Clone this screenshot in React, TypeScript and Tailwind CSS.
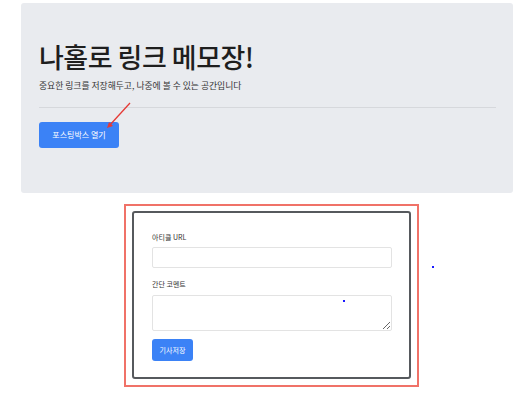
import React from 'react'

export default function App() {
  return (
    <div className="relative w-[531px] h-[398px] bg-white pt-[3px] font-['Noto_Sans_CJK_KR','Noto_Sans',sans-serif] text-[#222]">
      <section className="ml-[21px] w-[492px] h-[190px] rounded-[3px] bg-[#e9ebef] pl-[18px] pr-[17px] pt-[38px]">
        <h1 className="text-[27px] leading-[32px] font-medium tracking-[-0.5px] text-[#1e1e1e]">
          나홀로 링크 메모장!
        </h1>
        <p className="mt-[7px] text-[8.8px] leading-[12px] text-[#333]">
          중요한 링크를 저장해두고, 나중에 볼 수 있는 공간입니다
        </p>
        <hr className="mt-[15px] border-t border-[#d6d8dc]" />
        <button className="mt-[14px] w-[80px] h-[26px] rounded-[3px] bg-[#3b82f6] text-[8px] text-white">
          포스팅박스 열기
        </button>
      </section>

      <div className="ml-[124px] mt-[11px] w-[295px] h-[183px] border-2 border-[#f07268] pt-[5px] px-[6px] pb-[6px]">
        <form className="h-full rounded-[3px] border-2 border-[#56595d] bg-white pl-[18px] pr-[17px] pt-[19px]">
          <label htmlFor="url" className="block text-[7px] leading-[10px] text-[#333]">
            아티클 URL
          </label>
          <input
            id="url"
            type="text"
            className="mt-[5px] block w-[240px] h-[21px] rounded-[2px] border border-[#e3e3e3] bg-white"
          />
          <label htmlFor="comment" className="mt-[11px] block text-[7px] leading-[10px] text-[#333]">
            간단 코멘트
          </label>
          <textarea
            id="comment"
            className="mt-[6px] block w-[240px] h-[36px] rounded-[2px] border border-[#e3e3e3] bg-white"
          />
          <button
            type="button"
            className="mt-[8px] w-[41px] h-[22px] rounded-[3px] bg-[#3b82f6] text-[7px] text-white"
          >
            기사저장
          </button>
        </form>
      </div>

      {/* annotation arrow */}
      <svg className="absolute left-[100px] top-[98px]" width="40" height="36" viewBox="0 0 40 36">
        <line x1="30" y1="5" x2="9" y2="28" stroke="#e53935" strokeWidth="1.3" />
        <path d="M7 30 L9 24 L13 28 Z" fill="#e53935" />
      </svg>
      <span className="absolute left-[432px] top-[266px] w-[2px] h-[2px] bg-[#1a1aff]" />
      <span className="absolute left-[343px] top-[300px] w-[2px] h-[2px] bg-[#1a1aff]" />
    </div>
  )
}
